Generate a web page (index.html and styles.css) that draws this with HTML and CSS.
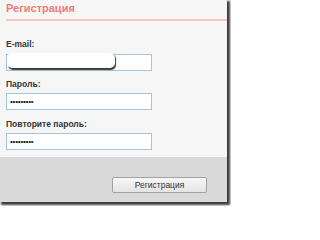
FILE: index.html
```html
<!DOCTYPE html>
<html lang="ru">
<head>
<meta charset="utf-8">
<title>Регистрация</title>
<link rel="stylesheet" href="styles.css">
</head>
<body>
<div class="window">
  <div class="header"><h1 class="title">Регистрация</h1></div>
  <form class="form">
    <div class="field first">
      <label class="label">E-mail:</label>
      <div class="input-wrap">
        <input class="input" type="text" value="">
        <span class="blob"></span>
      </div>
    </div>
    <div class="field">
      <label class="label">Пароль:</label>
      <input class="input pass" type="password" value="123456789">
    </div>
    <div class="field">
      <label class="label">Повторите пароль:</label>
      <input class="input pass" type="password" value="123456789">
    </div>
  </form>
  <div class="footer">
    <button class="button" type="button">Регистрация</button>
  </div>
</div>
</body>
</html>
```
FILE: styles.css
```css
html, body {
  margin: 0;
  padding: 0;
  background: #ffffff;
}
body {
  width: 231px;
  height: 206px;
  overflow: hidden;
  font-family: "Liberation Sans", Arial, sans-serif;
}
.window {
  width: 227px;
  height: 202px;
  background: #f6f6f6;
  display: flex;
  flex-direction: column;
  box-shadow: 2px 2px 2px 1px #3c3c3c;
}
.header {
  margin-left: 6px;
  height: 19px;
  border-bottom: 2px solid #f8c6c2;
}
.title {
  margin: 0;
  padding-top: 2px;
  font-size: 11px;
  line-height: 13px;
  font-weight: bold;
  color: #f07c75;
}
.form {
  margin: 18px 0 0 6px;
}
.field {
  display: flex;
  flex-direction: column;
  margin-top: 9px;
}
.field.first {
  margin-top: 0;
}
.label {
  font-size: 8.5px;
  line-height: 10px;
  font-weight: bold;
  color: #333333;
  margin-bottom: 4px;
}
.input-wrap {
  position: relative;
  width: 146px;
  height: 17px;
}
.input {
  box-sizing: border-box;
  width: 146px;
  height: 17px;
  margin: 0;
  padding: 0 0 0 3px;
  border: 1px solid #a3c6de;
  background: #ffffff;
  outline: none;
  font-family: "Liberation Sans", Arial, sans-serif;
}
.pass {
  font-size: 8px;
  letter-spacing: -0.2px;
  color: #111;
}
.blob {
  position: absolute;
  left: 1px;
  top: 0;
  width: 108px;
  height: 15px;
  background: #ffffff;
  border-radius: 5px;
  box-shadow: 1px 1.5px 1px #3a3a3a;
}
.footer {
  margin-top: auto;
  height: 45px;
  background: #d9d9d9;
  display: flex;
  justify-content: flex-end;
  align-items: flex-start;
  padding: 20px 20px 0 0;
  box-sizing: border-box;
}
.button {
  box-sizing: border-box;
  width: 95px;
  height: 16px;
  margin: 0;
  padding: 0;
  border: 1px solid #a2a2a2;
  border-radius: 2px;
  background: linear-gradient(#f7f7f7, #e4e4e4);
  font-family: "Liberation Sans", Arial, sans-serif;
  font-size: 8.5px;
  line-height: 14px;
  color: #333;
}
```
